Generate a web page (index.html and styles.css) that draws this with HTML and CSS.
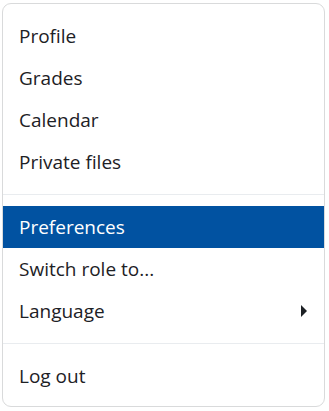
FILE: index.html
```html
<!doctype html>
<html lang="en">
  <head>
    <meta charset="UTF-8" />
    <meta name="viewport" content="width=device-width, initial-scale=1.0" />
    <title>User menu</title>
    <link rel="stylesheet" href="styles.css">
  </head>
  <body>
    <div class="menu" role="menu">
      <a class="item" href="#">Profile</a>
      <a class="item" href="#">Grades</a>
      <a class="item" href="#">Calendar</a>
      <a class="item" href="#">Private files</a>
      <div class="divider"></div>
      <a class="item active" href="#">Preferences</a>
      <a class="item" href="#">Switch role to...</a>
      <a class="item submenu" href="#">Language <span class="caret"></span></a>
      <div class="divider"></div>
      <a class="item" href="#">Log out</a>
    </div>
  </body>
</html>
```

FILE: styles.css
```css
* {
  margin: 0;
  padding: 0;
  box-sizing: border-box;
}

body {
  font-family: 'Open Sans', 'Noto Sans', sans-serif;
  background: #fff;
  color: #1d2125;
  padding: 3px 4px 4px 2px;
}

.menu {
  display: flex;
  flex-direction: column;
  border: 1px solid #d9dadb;
  border-radius: 9px;
  padding: 11px 0 9px;
  background: #fff;
}

.item {
  display: flex;
  align-items: center;
  justify-content: space-between;
  height: 42px;
  padding: 0 17px 0 16px;
  font-size: 19px;
  color: #1d2125;
  text-decoration: none;
}

.item.active {
  background: #0152a1;
  color: #fff;
}

.caret {
  width: 0;
  height: 0;
  border-left: 6px solid #1d2125;
  border-top: 6px solid transparent;
  border-bottom: 6px solid transparent;
}

.divider {
  height: 1px;
  margin: 11px 0;
  background: #e9ecef;
}
```
